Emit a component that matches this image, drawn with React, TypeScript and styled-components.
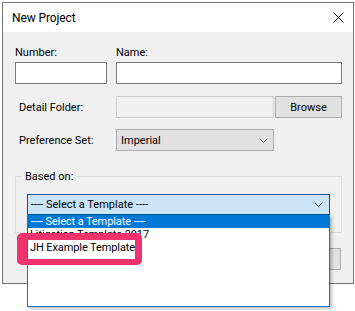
import styled, { createGlobalStyle } from 'styled-components';

const GlobalStyle = createGlobalStyle`
  html, body {
    margin: 0;
    padding: 0;
    background: #ffffff;
  }
  body {
    font-family: Roboto, "Liberation Sans", sans-serif;
    font-size: 11px;
    color: #000;
  }
`;

const Page = styled.div`
  width: 355px;
  height: 311px;
  padding: 2px 0 0 2px;
  box-sizing: border-box;
  overflow: hidden;
`;

const Window = styled.div`
  width: 352px;
  box-sizing: border-box;
  border: 1px solid #747474;
  background: #f0f0f0;
`;

const TitleBar = styled.div`
  height: 29px;
  background: #ffffff;
  display: flex;
  align-items: center;
  justify-content: space-between;
  padding: 0 9px 0 9px;
`;

const Title = styled.span`
  font-size: 12px;
  letter-spacing: -0.1px;
  color: #000;
`;

const CloseIcon = styled.svg`
  display: block;
  margin-top: -1px;
`;

const Body = styled.div`
  padding: 14px 11px 13px 12px;
`;

const TopRow = styled.div`
  display: flex;
  gap: 9px;
`;

const Field = styled.div<{ $w: number }>`
  display: flex;
  flex-direction: column;
  width: ${p => p.$w}px;
`;

const Label = styled.label`
  font-size: 11px;
  line-height: 13px;
  height: 13px;
  margin-bottom: 3px;
  white-space: nowrap;
`;

const TextBox = styled.div<{ $disabled?: boolean; $w?: number }>`
  height: 22px;
  width: ${p => (p.$w ? `${p.$w}px` : '100%')};
  flex: none;
  box-sizing: border-box;
  background: ${p => (p.$disabled ? '#f0f0f0' : '#ffffff')};
  border: 1px solid ${p => (p.$disabled ? '#cccccc' : '#7a7a7a')};
`;

const Row = styled.div<{ $mt: number }>`
  display: flex;
  align-items: center;
  gap: 1px;
  margin-top: ${p => p.$mt}px;
`;

const RowLabel = styled.span`
  width: 100px;
  padding-left: 4px;
  box-sizing: border-box;
  font-size: 11px;
  line-height: 13px;
  white-space: nowrap;
`;

const Button = styled.div<{ $w: number }>`
  width: ${p => p.$w}px;
  height: 22px;
  box-sizing: border-box;
  background: #e1e1e1;
  border: 1px solid #adadad;
  display: flex;
  align-items: center;
  justify-content: center;
  font-size: 11px;
`;

const Select = styled.div`
  width: 158px;
  height: 22px;
  box-sizing: border-box;
  background: #e1e1e1;
  border: 1px solid #adadad;
  display: flex;
  align-items: center;
  justify-content: space-between;
  padding: 0 5px 0 4px;
  font-size: 11px;
`;

const GroupBox = styled.fieldset`
  margin: 19px 0 0 0;
  padding: 11px 11px 17px 11px;
  border: 1px solid #dcdcdc;
  min-width: 0;
`;

const Legend = styled.legend`
  margin-left: -4px;
  padding: 0 2px;
  font-size: 11px;
  line-height: 13px;
`;

const ComboWrap = styled.div`
  position: relative;
`;

const Combo = styled.div`
  height: 21px;
  box-sizing: border-box;
  background: #cce4f7;
  border: 1px solid #005499;
  display: flex;
  align-items: center;
  justify-content: space-between;
  padding: 0 6px 0 3px;
  font-size: 11px;
`;

const DropList = styled.div`
  position: absolute;
  top: 100%;
  left: 0;
  right: 0;
  height: 92px;
  box-sizing: border-box;
  background: #ffffff;
  border: 1px solid #0078d7;
  border-top: none;
  box-shadow: 2px 2px 3px rgba(0, 0, 0, 0.25);
  z-index: 5;
`;

const Item = styled.div<{ $active?: boolean }>`
  height: 13px;
  line-height: 13px;
  font-size: 11px;
  letter-spacing: -0.1px;
  padding-left: ${p => (p.$active ? 3 : 2)}px;
  white-space: nowrap;
  background: ${p => (p.$active ? '#0078d7' : 'transparent')};
  color: ${p => (p.$active ? '#ffffff' : '#000000')};
`;

const Highlight = styled.div`
  position: absolute;
  left: -11px;
  top: 18px;
  width: 125px;
  height: 32px;
  box-sizing: border-box;
  border-style: solid;
  border-color: #f0336c;
  border-width: 7px 7px 6px 10px;
  border-radius: 5px;
  z-index: 6;
`;

const ButtonRow = styled.div`
  display: flex;
  justify-content: flex-end;
  gap: 6px;
  margin-top: 15px;
  padding-right: 1px;
`;

const Chevron = ({ color }: { color: string }) => (
  <svg width="9" height="5" viewBox="0 0 9 5">
    <polyline points="0.5,0.5 4.5,4.5 8.5,0.5" fill="none" stroke={color} strokeWidth="1" />
  </svg>
);

export default function App() {
  return (
    <>
      <GlobalStyle />
      <Page>
        <Window>
          <TitleBar>
            <Title>New Project</Title>
            <CloseIcon width="11" height="11" viewBox="0 0 11 11">
              <line x1="0.5" y1="0.5" x2="10.5" y2="10.5" stroke="#000" strokeWidth="1" />
              <line x1="10.5" y1="0.5" x2="0.5" y2="10.5" stroke="#000" strokeWidth="1" />
            </CloseIcon>
          </TitleBar>
          <Body>
            <TopRow>
              <Field $w={92}>
                <Label>Number:</Label>
                <TextBox />
              </Field>
              <Field $w={226}>
                <Label>Name:</Label>
                <TextBox />
              </Field>
            </TopRow>
            <Row $mt={12}>
              <RowLabel>Detail Folder:</RowLabel>
              <TextBox $disabled $w={158} />
              <Button $w={67}>Browse</Button>
            </Row>
            <Row $mt={11}>
              <RowLabel>Preference Set:</RowLabel>
              <Select>
                <span>Imperial</span>
                <Chevron color="#606060" />
              </Select>
            </Row>
            <GroupBox>
              <Legend>Based on:</Legend>
              <ComboWrap>
                <Combo>
                  <span>---- Select a Template ----</span>
                  <Chevron color="#404040" />
                </Combo>
                <DropList>
                  <Item $active>---- Select a Template ----</Item>
                  <Item>Litigation Template 2017</Item>
                  <Item>JH Example Template</Item>
                  <Highlight />
                </DropList>
              </ComboWrap>
            </GroupBox>
            <ButtonRow>
              <Button $w={75}>OK</Button>
              <Button $w={75}>Cancel</Button>
            </ButtonRow>
          </Body>
        </Window>
      </Page>
    </>
  );
}
